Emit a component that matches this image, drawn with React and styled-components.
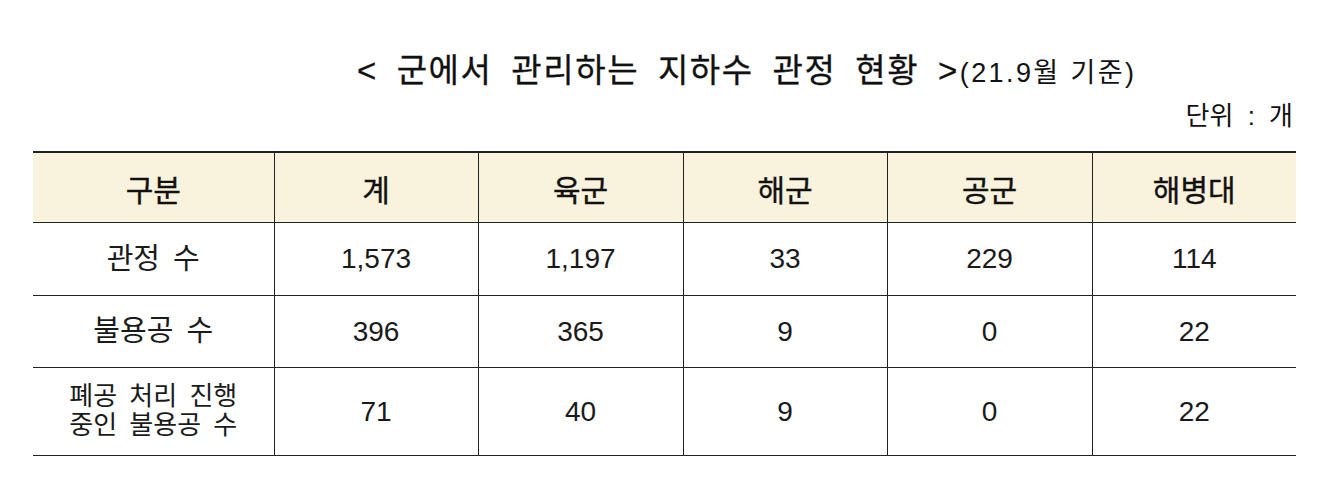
import React from "react";
import styled, { createGlobalStyle } from "styled-components";

const Global = createGlobalStyle`
  html, body { margin: 0; padding: 0; background: #ffffff; }
  body { font-family: "Liberation Sans", "Noto Sans CJK KR", sans-serif; color: #111; }
`;

const Page = styled.div`
  width: 1331px;
  height: 483px;
  box-sizing: border-box;
  padding: 51px 35px 0 33px;
  display: flex;
  flex-direction: column;
`;

const TitleRow = styled.div`
  display: flex;
  align-items: baseline;
  padding-left: 324px;
  height: 40px;
  line-height: 40px;
`;

const Title = styled.h1`
  margin: 0;
  font-size: 33px;
  font-weight: 400;
  -webkit-text-stroke: 0.3px #111;
  letter-spacing: 1.6px;
  word-spacing: 8px;
  white-space: pre;
`;

const Sub = styled.span`
  font-size: 27px;
  font-weight: 400;
  letter-spacing: 2.4px;
  margin-left: 1px;
  white-space: pre;
`;

const Unit = styled.div`
  align-self: flex-end;
  font-size: 26px;
  line-height: 30px;
  height: 30px;
  margin: 10px 3px 20px 0;
  word-spacing: 7px;
  white-space: pre;
`;

const Table = styled.table`
  border-collapse: collapse;
  width: 1263px;
  table-layout: fixed;
`;

const Th = styled.th`
  background: #f9f2dc;
  height: 69px;
  font-size: 30px;
  font-weight: 400;
  -webkit-text-stroke: 0.35px #111;
  border-top: 2px solid #222;
  border-bottom: 1.5px solid #222;
  border-left: 1px solid #222;
  padding: 0;
  &:first-child { border-left: none; }
`;

const Td = styled.td`
  height: ${(p) => p.$h}px;
  font-size: 28px;
  color: #1a1a1a;
  text-align: center;
  border-bottom: 1.5px solid #222;
  border-left: 1px solid #222;
  padding: 0;
  &:first-child { border-left: none; }
`;

const Label = styled.span`
  display: inline-block;
  font-size: ${(p) => (p.$small ? 26 : 29)}px;
  line-height: ${(p) => (p.$small ? 29 : 32)}px;
  letter-spacing: 0;
  word-spacing: 5px;
  white-space: pre;
`;

const cols = [241, 204, 205, 204, 205, 204];
const headers = ["구분", "계", "육군", "해군", "공군", "해병대"];
const rows = [
  { h: 72, label: ["관정 수"], values: ["1,573", "1,197", "33", "229", "114"] },
  { h: 71, label: ["불용공 수"], values: ["396", "365", "9", "0", "22"] },
  { h: 87, label: ["폐공 처리 진행", "중인 불용공 수"], values: ["71", "40", "9", "0", "22"] },
];

export default function App() {
  return (
    <>
      <Global />
      <Page>
        <TitleRow>
          <Title>&lt; 군에서 관리하는 지하수 관정 현황 &gt;</Title>
          <Sub>(21.9월 기준)</Sub>
        </TitleRow>
        <Unit>단위 : 개</Unit>
        <Table>
          <colgroup>
            {cols.map((w, i) => (
              <col key={i} style={{ width: w }} />
            ))}
          </colgroup>
          <thead>
            <tr>
              {headers.map((h) => (
                <Th key={h}>{h}</Th>
              ))}
            </tr>
          </thead>
          <tbody>
            {rows.map((r, i) => (
              <tr key={i}>
                <Td $h={r.h}>
                  <Label $small={r.label.length > 1}>{r.label.join("\n")}</Label>
                </Td>
                {r.values.map((v, j) => (
                  <Td key={j} $h={r.h}>
                    {v}
                  </Td>
                ))}
              </tr>
            ))}
          </tbody>
        </Table>
      </Page>
    </>
  );
}
